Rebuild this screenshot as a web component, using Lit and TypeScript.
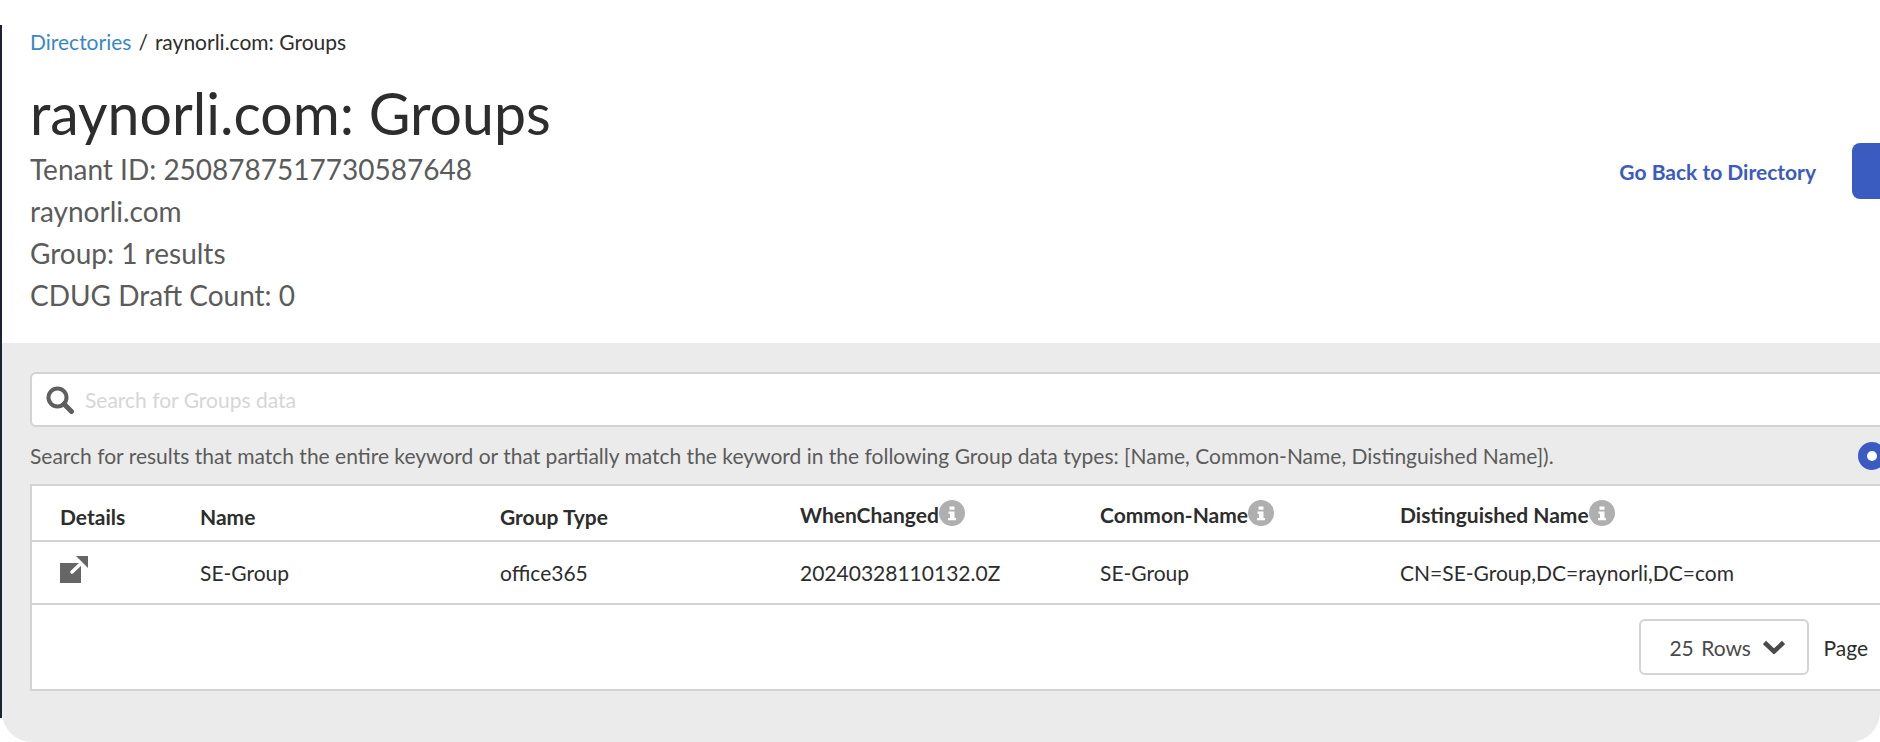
import { LitElement, html, css } from "lit";
import { customElement } from "lit/decorators.js";

const infoIcon = html`<svg class="info" viewBox="0 0 26 26" width="26" height="26" aria-hidden="true">
  <circle cx="13" cy="13" r="13" fill="#afafaf"></circle>
  <path d="M10.5 6.5h5v3.2h-5zM9.5 11.5h6v6.5h1.5v2.2H9v-2.2h2v-4.3H9.5z" fill="#fff"></path>
</svg>`;

@customElement("app-root")
export class AppRoot extends LitElement {
  static styles = css`
    :host {
      display: block;
      width: 1880px;
      height: 742px;
      background: #fff;
      font-family: Lato, "Liberation Sans", sans-serif;
      overflow: hidden;
    }
    .frame {
      height: 742px;
      display: flex;
      background: #fff;
    }
    .strip {
      flex: 0 0 2px;
      margin: 25px 0 24px;
      background: #1b2233;
    }
    .shell {
      flex: 1;
      min-width: 0;
      border-radius: 0 0 30px 30px;
      overflow: hidden;
    }
    .page {
      width: 2028px;
      height: 742px;
      display: flex;
      flex-direction: column;
      background: #fff;
    }
    .head {
      display: flex;
      align-items: flex-start;
      justify-content: space-between;
      height: 343px;
      box-sizing: border-box;
      padding: 30px 28px 0 28px;
    }
    .crumbs {
      font-size: 21px;
      line-height: 24px;
      color: #2d2d2d;
    }
    .crumbs a { color: #3a87c4; text-decoration: none; }
    .crumbs .sep { margin: 0 7px; }
    h1 {
      margin: 25px 0 0;
      font-size: 57.2px;
      line-height: 68px;
      font-weight: 400;
      color: #2d2d2d;
    }
    .meta {
      font-size: 28px;
      line-height: 42px;
      color: #5b5b5b;
    }
    .meta.first { margin-top: 1px; }
    .actions {
      display: flex;
      align-items: center;
      gap: 36px;
      margin-top: 113px;
    }
    .back {
      font-size: 21px;
      font-weight: 700;
      color: #3a5bc0;
      text-decoration: none;
    }
    .primary {
      width: 150px;
      height: 56px;
      background: #3a5bc0;
      border: 0;
      border-radius: 8px;
    }
    .band {
      flex: 1;
      background: #ebebeb;
      padding: 29px 28px 0 28px;
    }
    .search {
      height: 55px;
      box-sizing: border-box;
      background: #fff;
      border: 2px solid #d3d3d3;
      border-radius: 6px;
      display: flex;
      align-items: center;
      gap: 11px;
      padding-left: 14px;
      font-size: 21px;
      color: #d6d6d6;
    }
    .note-row {
      display: flex;
      align-items: center;
      justify-content: space-between;
      height: 57px;
      font-size: 21px;
      color: #5b5b5b;
    }
    .radio {
      width: 28px;
      height: 28px;
      box-sizing: border-box;
      border-radius: 50%;
      border: 9px solid #3a5bc0;
      background: #fff;
      margin-right: 116px;
    }
    .table {
      background: #fff;
      border: 2px solid #d3d3d3;
      font-size: 21px;
      color: #2d2d2d;
    }
    .row {
      display: grid;
      grid-template-columns: 140px 300px 300px 300px 300px 1fr;
      align-items: center;
      padding-left: 28px;
      border-bottom: 2px solid #d3d3d3;
    }
    .row.h { height: 54px; font-weight: 700; }
    .row.b { height: 61px; }
    .cell { display: flex; align-items: center; }
    .h .cell { margin-top: 7px; }
    .h .cell.i { margin-top: 2px; }
    .info { margin-top: -2px; }
    .open { margin-top: -5px; display: block; }
    .foot {
      height: 84px;
      display: flex;
      align-items: center;
      justify-content: flex-end;
      padding-right: 132px;
      gap: 14px;
    }
    .select {
      width: 170px;
      height: 56px;
      box-sizing: border-box;
      border: 2px solid #d3d3d3;
      border-radius: 6px;
      display: flex;
      align-items: center;
      gap: 12px;
      padding-left: 28px;
      color: #4a4a4a;
      font-size: 21px;
      word-spacing: 2px;
    }
  `;

  render() {
    return html`
      <div class="frame">
        <div class="strip"></div>
        <div class="shell">
          <div class="page">
            <header class="head">
              <div>
                <div class="crumbs"><a href="#">Directories</a><span class="sep">/</span>raynorli.com: Groups</div>
                <h1>raynorli.com: Groups</h1>
                <div class="meta first">Tenant ID: 2508787517730587648</div>
                <div class="meta">raynorli.com</div>
                <div class="meta">Group: 1 results</div>
                <div class="meta">CDUG Draft Count: 0</div>
              </div>
              <div class="actions">
                <a class="back" href="#">Go Back to Directory</a>
                <button class="primary" aria-label="Action"></button>
              </div>
            </header>
            <section class="band">
              <div class="search">
                <svg viewBox="0 0 28 28" width="28" height="28" aria-hidden="true">
                  <circle cx="11.5" cy="11.5" r="9" fill="none" stroke="#5f5f5f" stroke-width="4"></circle>
                  <path d="M18 18L25.5 25.5" stroke="#5f5f5f" stroke-width="5" stroke-linecap="round"></path>
                </svg>
                <span>Search for Groups data</span>
              </div>
              <div class="note-row">
                <span>Search for results that match the entire keyword or that partially match the keyword in the following Group data types: [Name, Common-Name, Distinguished Name]).</span>
                <span class="radio"></span>
              </div>
              <div class="table">
                <div class="row h">
                  <div class="cell">Details</div>
                  <div class="cell">Name</div>
                  <div class="cell">Group Type</div>
                  <div class="cell i">WhenChanged${infoIcon}</div>
                  <div class="cell i">Common-Name${infoIcon}</div>
                  <div class="cell i">Distinguished Name${infoIcon}</div>
                </div>
                <div class="row b">
                  <div class="cell">
                    <svg class="open" viewBox="0 0 28 28" width="28" height="28" aria-hidden="true">
                      <path d="M0 7h21v20H0z" fill="#666"></path>
                      <path d="M12 16L22 6.5" stroke="#fff" stroke-width="3.5" stroke-linecap="round"></path>
                      <path d="M16 0h12v12z" fill="#666"></path>
                    </svg>
                  </div>
                  <div class="cell">SE-Group</div>
                  <div class="cell">office365</div>
                  <div class="cell">20240328110132.0Z</div>
                  <div class="cell">SE-Group</div>
                  <div class="cell">CN=SE-Group,DC=raynorli,DC=com</div>
                </div>
                <div class="foot">
                  <div class="select">
                    <span>25 Rows</span>
                    <svg viewBox="0 0 22 14" width="22" height="14" aria-hidden="true">
                      <path d="M1.5 2.5l9.5 9 9.5-9" fill="none" stroke="#4a4a4a" stroke-width="4.5"></path>
                    </svg>
                  </div>
                  <span>Page</span>
                </div>
              </div>
            </section>
          </div>
        </div>
      </div>
    `;
  }
}
